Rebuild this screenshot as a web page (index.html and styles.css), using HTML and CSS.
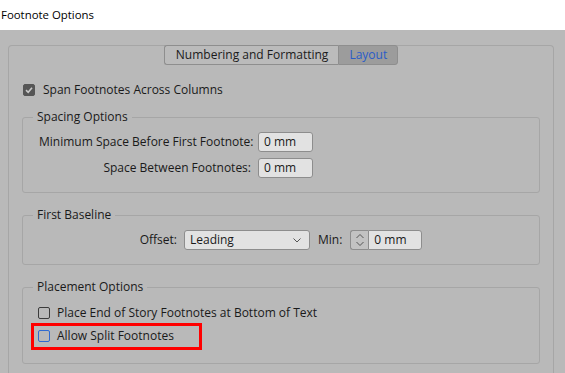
FILE: index.html
```html
<!DOCTYPE html>
<html>
<head>
    <link rel="stylesheet" href="styles.css">
</head>
<body>
    <div class="titlebar">Footnote Options</div>
    <div class="dialog">
        <div class="panel">
            <div class="tabs">
                <span class="tab">Numbering and Formatting</span>
                <span class="tab active">Layout</span>
            </div>

            <div class="check-row span-row">
                <span class="box checked">
                    <svg width="10" height="10" viewBox="0 0 10 10"><path d="M2 5.2 L4.2 7.3 L8 2.8" fill="none" stroke="#c9c9c9" stroke-width="1.6"/></svg>
                </span>
                Span Footnotes Across Columns
            </div>

            <fieldset class="group spacing">
                <legend>Spacing Options</legend>
                <div class="field-grid">
                    <span class="lbl">Minimum Space Before First Footnote:</span>
                    <span class="input">0 mm</span>
                    <span class="lbl">Space Between Footnotes:</span>
                    <span class="input">0 mm</span>
                </div>
            </fieldset>

            <fieldset class="group baseline">
                <legend>First Baseline</legend>
                <div class="baseline-row">
                    <span class="lbl">Offset:</span>
                    <span class="select">
                        Leading
                        <svg width="8" height="5" viewBox="0 0 8 5"><path d="M0.5 0.5 L4 4 L7.5 0.5" fill="none" stroke="#555" stroke-width="1"/></svg>
                    </span>
                    <span class="lbl min-lbl">Min:</span>
                    <span class="spinner">
                        <svg width="10" height="16" viewBox="0 0 10 16"><path d="M1.5 6 L5 2.5 L8.5 6 M1.5 10 L5 13.5 L8.5 10" fill="none" stroke="#555" stroke-width="1"/></svg>
                    </span>
                    <span class="input min-input">0 mm</span>
                </div>
            </fieldset>

            <fieldset class="group placement">
                <legend>Placement Options</legend>
                <div class="check-row">
                    <span class="box"></span>
                    Place End of Story Footnotes at Bottom of Text
                </div>
                <div class="highlight">
                    <div class="check-row">
                        <span class="box focus"></span>
                        Allow Split Footnotes
                    </div>
                </div>
            </fieldset>
        </div>
    </div>
</body>
</html>
```

FILE: styles.css
```css
body {
    margin: 0;
    height: 373px;
    overflow: hidden;
    font-family: "Open Sans", "Noto Sans", sans-serif;
    font-size: 12px;
    color: #1a1a1a;
    background: #b9b9b9;
}

.titlebar {
    height: 30px;
    line-height: 30px;
    background: #ffffff;
    color: #000;
    font-size: 11.4px;
    padding-left: 1px;
}

.dialog {
    height: 343px;
    display: flex;
    flex-direction: column;
    padding: 15px 11px 0 8px;
    box-sizing: border-box;
}

.panel {
    flex: 1;
    border: 1px solid #a6a6a6;
    border-bottom: none;
    border-radius: 4px 4px 0 0;
    line-height: 16px;
}

.tabs {
    display: flex;
    justify-content: center;
    margin-top: -1px;
}

.tab {
    height: 18px;
    line-height: 18px;
    padding: 0 10px;
    border: 1px solid #8e8e8e;
    background: #bbbbbb;
}

.tab:first-child {
    border-radius: 3px 0 0 3px;
    border-right: none;
    padding-left: 11px;
}

.tab.active {
    background: #9c9c9c;
    color: #2a5cc8;
    border-radius: 0 3px 3px 0;
}

.check-row {
    display: flex;
    align-items: center;
    height: 16px;
}

.span-row {
    margin: 17px 0 0 14px;
}

.box {
    width: 12px;
    height: 12px;
    box-sizing: border-box;
    border: 1px solid #3b3b3b;
    border-radius: 2px;
    margin-right: 7px;
    display: flex;
    align-items: center;
    justify-content: center;
}

.box.checked {
    background: #565656;
    border-color: #565656;
    margin-right: 8px;
}

.box.focus {
    border-color: #2f6ad0;
}

.group {
    margin: 11px 13px 0;
    padding: 7px 16px 14px;
    border: 1px solid #a6a6a6;
    border-radius: 3px;
    min-width: 0;
}

.group legend {
    margin-left: -6px;
    padding: 0 4px;
    line-height: 16px;
}

.baseline,
.placement {
    margin-top: 14px;
}

.field-grid {
    display: grid;
    grid-template-columns: 212px 55px;
    column-gap: 7px;
    row-gap: 6px;
    align-items: center;
}

.field-grid .lbl {
    text-align: right;
    white-space: nowrap;
}

.input {
    height: 20px;
    box-sizing: border-box;
    border: 1px solid #8d8d8d;
    border-radius: 3px;
    background: #e2e2e2;
    padding-left: 5px;
    line-height: 18px;
}

.baseline-row {
    display: flex;
    align-items: center;
    justify-content: center;
    height: 20px;
}

.select {
    width: 126px;
    height: 20px;
    box-sizing: border-box;
    margin-left: 7px;
    border: 1px solid #8d8d8d;
    border-radius: 3px;
    background: #e2e2e2;
    padding: 0 8px 0 5px;
    display: flex;
    align-items: center;
    justify-content: space-between;
}

.min-lbl {
    margin: 0 8px;
}

.spinner {
    width: 18px;
    height: 20px;
    box-sizing: border-box;
    border: 1px solid #8d8d8d;
    border-right: none;
    border-radius: 3px 0 0 3px;
    background: #c2c2c2;
    display: flex;
    align-items: center;
    justify-content: center;
}

.min-input {
    width: 54px;
    border-radius: 0 3px 3px 0;
}

.placement {
    padding-top: 10px;
    padding-bottom: 13px;
}

.placement .check-row {
    margin-left: -1px;
}

.highlight {
    width: 171px;
    box-sizing: border-box;
    margin: 2px 0 0 -8px;
    border: 3px solid #ff0000;
    padding: 2px 4px 3px;
}

.highlight .check-row {
    margin-left: 0;
}
```
